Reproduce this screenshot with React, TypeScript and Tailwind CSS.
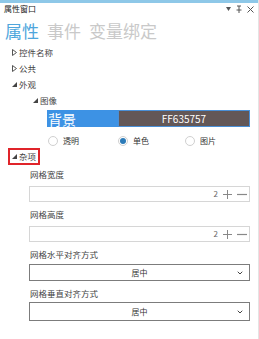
import { ChevronDown } from 'lucide-react';

const font = { fontFamily: '"Noto Sans CJK SC", "Noto Sans", sans-serif' };

function Collapsed() {
  return (
    <svg width="5" height="7" viewBox="0 0 5 7" className="shrink-0">
      <path d="M0.5 0.5 L4.5 3.5 L0.5 6.5 Z" fill="none" stroke="#555" strokeWidth="1" />
    </svg>
  );
}

function Expanded() {
  return (
    <svg width="5" height="5" viewBox="0 0 5 5" className="shrink-0">
      <path d="M5 0 L5 5 L0 5 Z" fill="#444" />
    </svg>
  );
}

function TreeRow({ label, open, indent }: { label: string; open?: boolean; indent: string }) {
  return (
    <div className={`h-[16px] flex items-center gap-[2px] ${indent}`}>
      {open ? <Expanded /> : <Collapsed />}
      <span className="text-[8.5px] text-[#444] leading-none whitespace-nowrap">{label}</span>
    </div>
  );
}

function Radio({ label, checked }: { label: string; checked?: boolean }) {
  return (
    <div className="flex items-center gap-[5px]">
      <div className="w-[10px] h-[10px] rounded-full border border-[#d0d0d0] bg-white flex items-center justify-center">
        {checked && <div className="w-[6px] h-[6px] rounded-full bg-[#2c7bb8]" />}
      </div>
      <span className="text-[8px] text-[#333] leading-none">{label}</span>
    </div>
  );
}

function Label({ text }: { text: string }) {
  return (
    <div className="h-[18px] flex items-center pl-[30px] text-[8.5px] text-[#444] leading-none">{text}</div>
  );
}

function Stepper({ className }: { className: string }) {
  return (
    <div className={`ml-[29px] w-[221px] h-[16px] border border-[#d6d6d6] bg-white flex items-center justify-end pr-[2px] gap-[5px] text-[#888] ${className}`}>
      <span className="text-[8px] leading-none text-[#666]">2</span>
      <svg width="9" height="9" viewBox="0 0 9 9"><path d="M4.5 0 V9 M0 4.5 H9" stroke="#888" strokeWidth="1" /></svg>
      <svg width="10" height="9" viewBox="0 0 10 9"><path d="M0 4.5 H10" stroke="#888" strokeWidth="1.2" /></svg>
    </div>
  );
}

function Select({ className }: { className: string }) {
  return (
    <div className={`ml-[29px] w-[221px] border border-[#7c7c7c] bg-white relative flex items-center justify-center ${className}`}>
      <span className="text-[8px] text-[#333] leading-none">居中</span>
      <ChevronDown size={8} strokeWidth={3} className="absolute right-[5px] text-[#444]" />
    </div>
  );
}

export default function App() {
  return (
    <div className="w-[259px] h-[339px] bg-white overflow-hidden flex flex-col border-r border-[#e4e4e4]" style={font}>
      <div className="h-[3px] bg-[#8ec8e8]" />
      <div className="h-[12px] flex items-center justify-between pl-[4px] pr-[4px]">
        <span className="text-[8px] text-[#222] leading-none">属性窗口</span>
        <div className="flex items-center gap-[5px] text-[#555]">
          <svg width="5" height="4" viewBox="0 0 5 4"><path d="M0 0 L5 0 L2.5 4 Z" fill="#555" /></svg>
          <svg width="6" height="8" viewBox="0 0 6 8"><path d="M1 1 H5 M3 1 V5 M0.5 5 H5.5 M3 5 V8" stroke="#555" strokeWidth="1" fill="none" /></svg>
          <svg width="7" height="7" viewBox="0 0 7 7"><path d="M0.5 0.5 L6.5 6.5 M6.5 0.5 L0.5 6.5" stroke="#555" strokeWidth="1" /></svg>
        </div>
      </div>
      <div className="mt-[5px] h-[20px] flex items-center gap-[8px] pl-[5px] text-[17px] leading-none">
        <span className="text-[#4ea6dc]">属性</span>
        <span className="text-[#c9c9c9]">事件</span>
        <span className="text-[#c9c9c9]">变量绑定</span>
      </div>
      <div className="mt-[4px]">
        <TreeRow label="控件名称" indent="pl-[12px]" />
        <TreeRow label="公共" indent="pl-[12px]" />
        <TreeRow label="外观" open indent="pl-[12px]" />
        <TreeRow label="图像" open indent="pl-[33px]" />
      </div>
      <div className="mt-[2px] ml-[47px] w-[203px] h-[17px] flex">
        <div className="w-[71px] bg-[#3d92e4] flex items-center pl-[1px]">
          <span className="text-[14px] text-white leading-none">背景</span>
        </div>
        <div className="flex-1 bg-[#635757] border border-[#4a8fd6] flex items-center justify-center">
          <span className="text-[10px] text-white leading-none">FF635757</span>
        </div>
      </div>
      <div className="mt-[6px] h-[15px] flex items-center pl-[48px]">
        <div className="w-[70px]"><Radio label="透明" /></div>
        <div className="w-[67px]"><Radio label="单色" checked /></div>
        <Radio label="图片" />
      </div>
      <div className="self-start ml-[8px] h-[17px] border-2 border-[#e0242a] flex items-center gap-[2px] pl-[2px] pr-[2px]">
        <Expanded />
        <span className="text-[8.5px] text-[#444] leading-none whitespace-nowrap">杂项</span>
      </div>
      <Label text="网格宽度" />
      <Stepper className="mt-[3px]" />
      <div className="mt-[3px]"><Label text="网格高度" /></div>
      <Stepper className="mt-[3px]" />
      <div className="mt-[3px]"><Label text="网格水平对齐方式" /></div>
      <Select className="mt-[1px] h-[17px]" />
      <div className="mt-[3px]"><Label text="网格垂直对齐方式" /></div>
      <Select className="h-[19px]" />
    </div>
  );
}
